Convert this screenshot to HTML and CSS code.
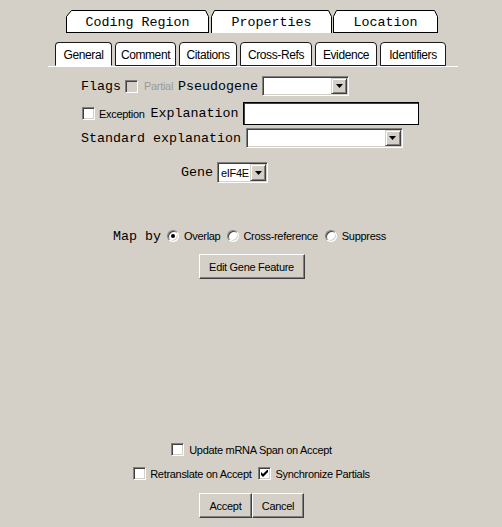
FILE: index.html
```html
<!DOCTYPE html>
<html>
<head>
<meta charset="utf-8">
<link rel="stylesheet" href="styles.css">
</head>
<body>
<div class="tabs-top">
  <div class="ttab tw1">
    <svg class="tshape" width="143" height="23" viewBox="0 0 143 23"><path d="M0.5 23V6.5L5.5 0.5H139.5L142.5 6.5V23" fill="#fff" stroke="#000"/><path d="M0 22.5H143" stroke="#000"/></svg>
    <span class="ttext">Coding Region</span>
  </div>
  <div class="ttab tw2">
    <svg class="tshape" width="121" height="23" viewBox="0 0 121 23"><path d="M0.5 23V6.5L3.5 0.5H117.5L120.5 6.5V23" fill="#fff" stroke="#000"/><path d="M1 22.5H120" stroke="#fff"/></svg>
    <span class="ttext">Properties</span>
  </div>
  <div class="ttab tw3">
    <svg class="tshape" width="105" height="23" viewBox="0 0 105 23"><path d="M0.5 23V6.5L3.5 0.5H101.5L104.5 6.5V23" fill="#fff" stroke="#000"/><path d="M0 22.5H105" stroke="#000"/></svg>
    <span class="ttext">Location</span>
  </div>
</div>

<div class="tabs-sub">
  <div class="stab sel sw1">General</div>
  <div class="stab sw2">Comment</div>
  <div class="stab sw3">Citations</div>
  <div class="stab sw4">Cross-Refs</div>
  <div class="stab sw5">Evidence</div>
  <div class="stab sw6">Identifiers</div>
</div>
<div class="tab-line"></div>

<div class="row row-flags">
  <span class="mono">Flags</span>
  <span class="cb disabled ml4"></span>
  <span class="lbl gray ml6">Partial</span>
  <span class="mono ml5">Pseudogene</span>
  <div class="select sel-pseudo ml4"><span class="arrow"><svg width="7" height="4" viewBox="0 0 7 4"><path d="M0 0H7L3.5 4Z" fill="#000"/></svg></span></div>
</div>

<div class="row row-exc">
  <span class="cb"></span>
  <span class="lbl ml4">Exception</span>
  <span class="mono ml6">Explanation</span>
  <div class="textbox ml4"></div>
</div>

<div class="row row-std">
  <span class="mono">Standard explanation</span>
  <div class="select sel-std ml5"><span class="arrow"><svg width="7" height="4" viewBox="0 0 7 4"><path d="M0 0H7L3.5 4Z" fill="#000"/></svg></span></div>
</div>

<div class="row row-gene">
  <span class="mono">Gene</span>
  <div class="select sel-gene ml4"><span class="sel-value">eIF4E</span><span class="arrow"><svg width="7" height="4" viewBox="0 0 7 4"><path d="M0 0H7L3.5 4Z" fill="#000"/></svg></span></div>
</div>

<div class="row row-map">
  <span class="mono">Map by</span>
  <span class="radio on ml6"></span>
  <span class="lbl ml5">Overlap</span>
  <span class="radio ml7"></span>
  <span class="lbl ml4">Cross-reference</span>
  <span class="radio ml7"></span>
  <span class="lbl ml5">Suppress</span>
</div>

<div class="row center row-edit">
  <button class="btn btn-edit">Edit Gene Feature</button>
</div>

<div class="row center row-update">
  <span class="cb"></span>
  <span class="lbl ml5">Update mRNA Span on Accept</span>
</div>

<div class="row center row-retr">
  <span class="cb"></span>
  <span class="lbl ml4">Retranslate on Accept</span>
  <span class="cb checked ml6"><svg width="7" height="7" viewBox="0 0 7 7"><path d="M0 2L2 4L7 -1V2L2 7L0 5Z" fill="#000"/></svg></span>
  <span class="lbl ml5">Synchronize Partials</span>
</div>

<div class="row center row-buttons">
  <button class="btn btn-accept">Accept</button>
  <button class="btn btn-cancel ml3">Cancel</button>
</div>
</body>
</html>
```

FILE: styles.css
```css
html, body {
  margin: 0;
  padding: 0;
}
body {
  width: 502px;
  height: 527px;
  overflow: hidden;
  background: #d4d0c8;
  font-family: "Liberation Sans", Arial, sans-serif;
  font-size: 11px;
  color: #000;
}

/* top tabs */
.tabs-top {
  display: flex;
  gap: 1px;
  padding: 10px 0 0 66px;
  height: 23px;
}
.ttab {
  position: relative;
  height: 23px;
  display: flex;
  align-items: center;
  justify-content: center;
  font-family: "Liberation Mono", "Courier New", monospace;
  font-size: 13.33px;
}
.tw1 { width: 143px; }
.tw2 { width: 121px; margin-left: 1px; }
.tw3 { width: 105px; }
.tshape {
  position: absolute;
  left: 0;
  top: 0;
}
.ttext {
  position: relative;
  padding-top: 1px;
}

/* sub tabs */
.tabs-sub {
  display: flex;
  gap: 3px;
  margin-top: 9px;
  padding-left: 55px;
  height: 24px;
}
.stab {
  box-sizing: border-box;
  height: 24px;
  background: #fff;
  border: 1px solid #1a1a1a;
  border-radius: 4px 4px 0 0;
  display: flex;
  align-items: center;
  justify-content: center;
  font-size: 12px;
  letter-spacing: -0.4px;
  padding-top: 1px;
}
.stab.sel {
  border-bottom-color: #fff;
}
.sw1 { width: 57px; }
.sw2 { width: 61px; }
.sw3 { width: 58px; }
.sw4 { width: 72px; }
.sw5 { width: 62px; }
.sw6 { width: 66px; }
.tab-line {
  height: 1px;
  margin-left: 48px;
  width: 410px;
  background: #fff;
}

/* rows */
.row {
  display: flex;
  align-items: center;
}
.row.center {
  justify-content: center;
  padding-left: 1px;
}
.row-flags { margin-top: 9px; height: 20px; padding-left: 81px; }
.row-exc { margin-top: 6px; height: 23px; padding-left: 82px; }
.row-std { margin-top: 3px; height: 20px; padding-left: 81px; }
.row-gene { margin-top: 14px; height: 21px; padding-left: 181px; }
.row-map { margin-top: 46px; height: 14px; padding-left: 113px; }
.row-edit { margin-top: 11px; height: 25px; }
.row-update { margin-top: 164px; height: 13px; }
.row-retr { margin-top: 11px; height: 13px; }
.row-buttons { margin-top: 13px; height: 25px; padding-left: 2px; }

.ml3 { margin-left: 3px; }
.ml4 { margin-left: 4px; }
.ml5 { margin-left: 5px; }
.ml6 { margin-left: 6px; }
.ml7 { margin-left: 7px; }

.mono {
  font-family: "Liberation Mono", "Courier New", monospace;
  font-size: 13.33px;
  white-space: pre;
}
.lbl {
  font-size: 11px;
  letter-spacing: -0.3px;
  white-space: nowrap;
}
.gray {
  color: #9a9a9a;
}

/* checkbox */
.cb {
  box-sizing: border-box;
  width: 13px;
  height: 13px;
  flex: none;
  background: #fff;
  border: 1px solid;
  border-color: #808080 #fff #fff #808080;
  box-shadow: inset 1px 1px 0 #404040, inset -1px -1px 0 #d4d0c8;
  display: flex;
  align-items: center;
  justify-content: center;
}
.cb.disabled {
  background: #d4d0c8;
}
.cb svg {
  display: block;
}

/* radio */
.radio {
  box-sizing: border-box;
  width: 12px;
  height: 12px;
  flex: none;
  border-radius: 50%;
  background: #fff;
  border: 1px solid;
  border-color: #808080 #fff #fff #808080;
  box-shadow: inset 1px 1px 0 #404040, inset -1px -1px 0 #d4d0c8;
  display: flex;
  align-items: center;
  justify-content: center;
}
.radio.on::after {
  content: "";
  width: 4px;
  height: 4px;
  border-radius: 50%;
  background: #000;
}

/* select */
.select {
  box-sizing: border-box;
  flex: none;
  background: #fff;
  border: 1px solid;
  border-color: #808080 #fff #fff #808080;
  box-shadow: inset 1px 1px 0 #404040, inset -1px -1px 0 #d4d0c8;
  padding: 1px;
  display: flex;
  align-items: stretch;
  justify-content: flex-end;
}
.sel-pseudo { width: 87px; height: 20px; }
.sel-std { width: 157px; height: 20px; }
.sel-gene { width: 51px; height: 21px; justify-content: space-between; }
.sel-value {
  font-size: 11px;
  letter-spacing: -0.3px;
  align-self: center;
  padding-left: 2px;
}
.arrow {
  box-sizing: border-box;
  width: 16px;
  flex: none;
  background: #d4d0c8;
  border: 1px solid;
  border-color: #d4d0c8 #404040 #404040 #d4d0c8;
  box-shadow: inset 1px 1px 0 #fff, inset -1px -1px 0 #808080;
  display: flex;
  align-items: center;
  justify-content: center;
}
.arrow svg {
  display: block;
}

/* text box */
.textbox {
  box-sizing: border-box;
  width: 176px;
  height: 23px;
  flex: none;
  background: #fff;
  border: 1px solid #000;
  box-shadow: inset 1px 1px 0 #404040;
}

/* buttons */
.btn {
  box-sizing: border-box;
  height: 25px;
  margin: 0;
  padding: 0;
  background: #d4d0c8;
  border: 1px solid;
  border-color: #fff #404040 #404040 #fff;
  box-shadow: inset -1px -1px 0 #808080;
  font-family: "Liberation Sans", Arial, sans-serif;
  font-size: 11px;
  letter-spacing: -0.3px;
  color: #000;
}
.btn-edit { width: 106px; }
.btn-accept { width: 53px; }
.btn-cancel { width: 52px; }
```
